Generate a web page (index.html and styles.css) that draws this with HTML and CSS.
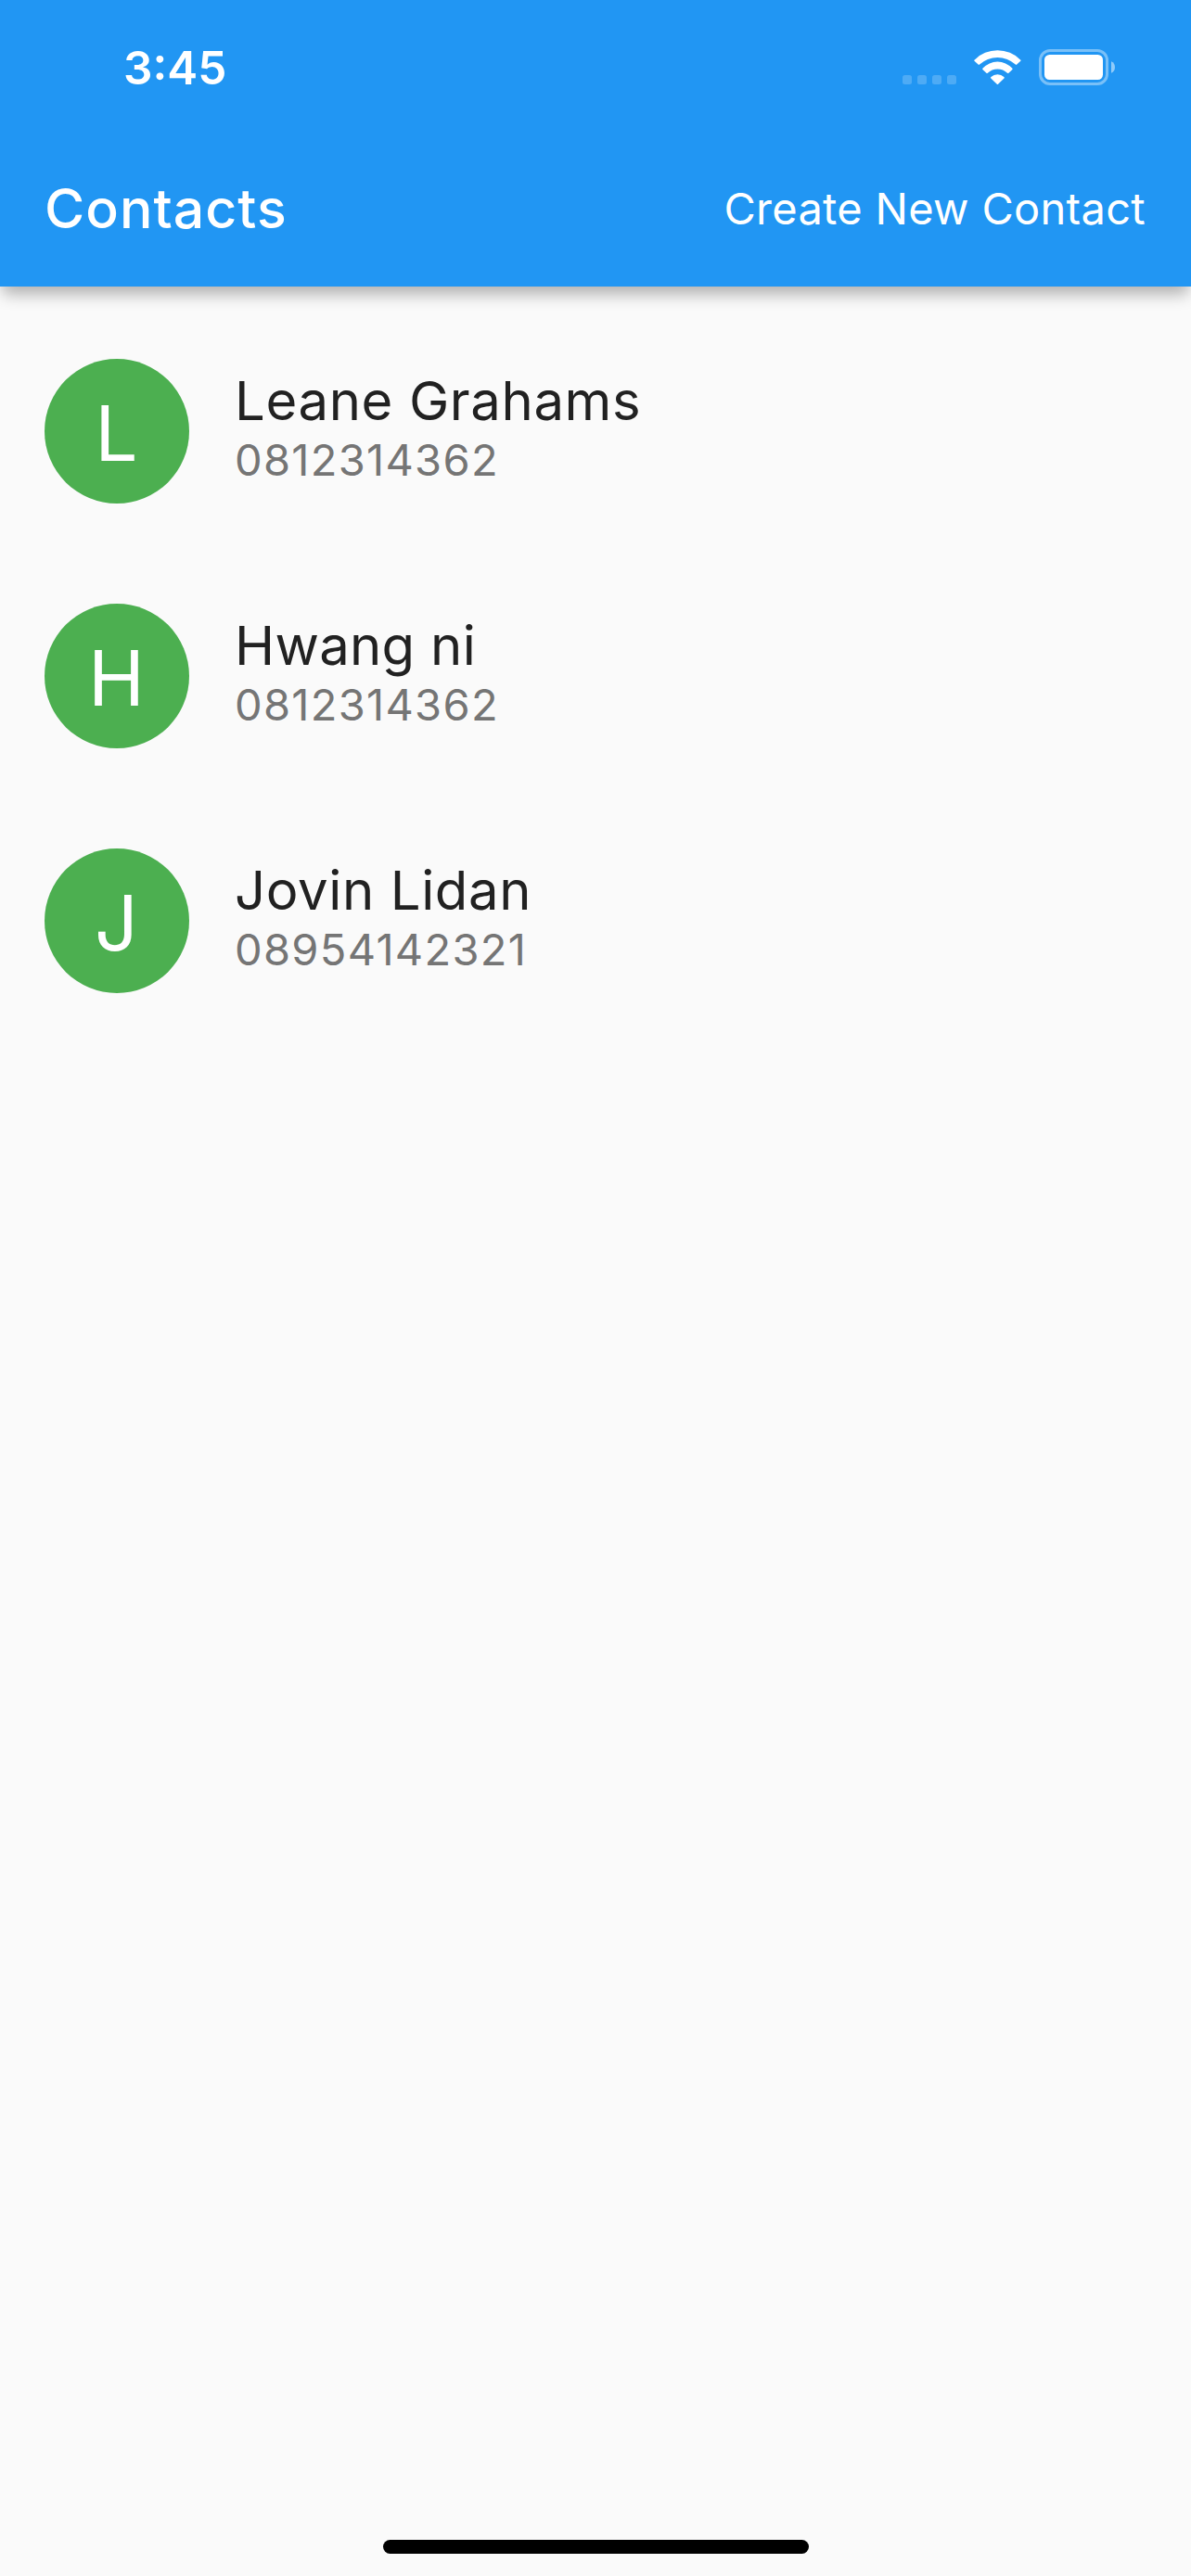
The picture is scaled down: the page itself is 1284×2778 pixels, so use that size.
FILE: index.html
```html
<!DOCTYPE html>
<html lang="en">
<head>
<meta charset="utf-8">
<title>Contacts</title>
<link rel="stylesheet" href="styles.css">
</head>
<body>
<div class="screen">
  <header class="header">
    <div class="status">
      <span class="time">3:45</span>
      <svg class="status-icons" width="230" height="39" viewBox="0 0 230 39" fill="#fff" aria-hidden="true">
        <g opacity=".2">
          <rect x="0" y="28" width="10" height="10" rx="2.5"/>
          <rect x="16" y="28" width="10" height="10" rx="2.5"/>
          <rect x="32" y="28" width="10" height="10" rx="2.5"/>
          <rect x="48" y="28" width="10" height="10" rx="2.5"/>
        </g>
        <path d="M77.8 11.4A34.8 34.8 0 0 1 127 11.4Q128 12 127.3 12.8L123.2 16.6Q122.5 17.2 121.8 16.6A28.7 28.7 0 0 0 83 16.6Q82.3 17.2 81.6 16.6L77.5 12.8Q76.8 12 77.8 11.4Z"/>
        <path d="M86.6 20.6A21.3 21.3 0 0 1 118.2 20.6Q119.1 21.3 118.4 22L114.4 25.7Q113.7 26.3 113 25.7A15.3 15.3 0 0 0 91.8 25.7Q91.1 26.3 90.4 25.7L86.4 22Q85.7 21.3 86.6 20.6Z"/>
        <path d="M95.4 30.1A10 10 0 0 1 109.4 30.1Q110.2 30.8 109.5 31.4L103 37.7Q102.4 38.3 101.8 37.7L95.3 31.4Q94.6 30.8 95.4 30.1Z"/>
        <rect x="148.5" y="1.5" width="72" height="36" rx="10.5" fill="none" stroke="#fff" stroke-width="3" opacity=".4"/>
        <rect x="153" y="6" width="63" height="27" rx="5.5"/>
        <path d="M225 13.2Q229 15 229 19.5T225 25.8Z" opacity=".5"/>
      </svg>
    </div>
    <div class="toolbar">
      <h1 class="title">Contacts</h1>
      <a class="action">Create New Contact</a>
    </div>
  </header>
  <main class="list">
    <div class="contact">
      <div class="avatar">L</div>
      <div class="details">
        <div class="name name-wide">Leane Grahams</div>
        <div class="phone">0812314362</div>
      </div>
    </div>
    <div class="contact">
      <div class="avatar">H</div>
      <div class="details">
        <div class="name">Hwang ni</div>
        <div class="phone">0812314362</div>
      </div>
    </div>
    <div class="contact">
      <div class="avatar">J</div>
      <div class="details">
        <div class="name name-wide">Jovin Lidan</div>
        <div class="phone">08954142321</div>
      </div>
    </div>
  </main>
  <div class="home-indicator"></div>
</div>
</body>
</html>
```
FILE: styles.css
```css
* {
  box-sizing: border-box;
}

body {
  margin: 0;
  font-family: Inter, "Liberation Sans", sans-serif;
  background: #fafafa;
}

.screen {
  display: flex;
  flex-direction: column;
  width: 1284px;
  height: 2778px;
  overflow: hidden;
}

.header {
  height: 309px;
  background: #2196f3;
  color: #fff;
  box-shadow: 0 11px 16px -3px rgba(0, 0, 0, .3);
}

.status {
  display: flex;
  justify-content: space-between;
  align-items: flex-start;
  height: 141px;
  padding: 43px 81px 0 133px;
}

.time {
  font-size: 49.5px;
  font-weight: 600;
  line-height: 60px;
}

.status-icons {
  margin-top: 10px;
}

.toolbar {
  display: flex;
  justify-content: space-between;
  align-items: center;
  height: 168px;
  padding: 0 49px 0 48px;
}

.title {
  margin: 0;
  font-size: 59px;
  font-weight: 500;
  line-height: 70px;
  letter-spacing: 1px;
}

.action {
  font-size: 47px;
  line-height: 56px;
  letter-spacing: .3px;
}

.list {
  display: flex;
  flex: 1;
  flex-direction: column;
  gap: 108px;
  padding: 78px 48px 0;
}

.contact {
  display: flex;
  gap: 49px;
  height: 156px;
}

.avatar {
  width: 156px;
  height: 156px;
  padding: 31px 1px 0 0;
  border-radius: 50%;
  background: #4caf50;
  color: #fff;
  font-size: 82px;
  line-height: 99px;
  text-align: center;
}

.details {
  padding-top: 10px;
}

.name {
  color: #212121;
  font-size: 58px;
  line-height: 70px;
  letter-spacing: .3px;
}

.name-wide {
  letter-spacing: .63px;
}

.phone {
  color: #757575;
  font-size: 47px;
  line-height: 57px;
  letter-spacing: 1.3px;
}

.home-indicator {
  align-self: center;
  width: 459px;
  height: 15px;
  margin: 0 0 24px 1px;
  border-radius: 8px;
  background: #000;
}
```
